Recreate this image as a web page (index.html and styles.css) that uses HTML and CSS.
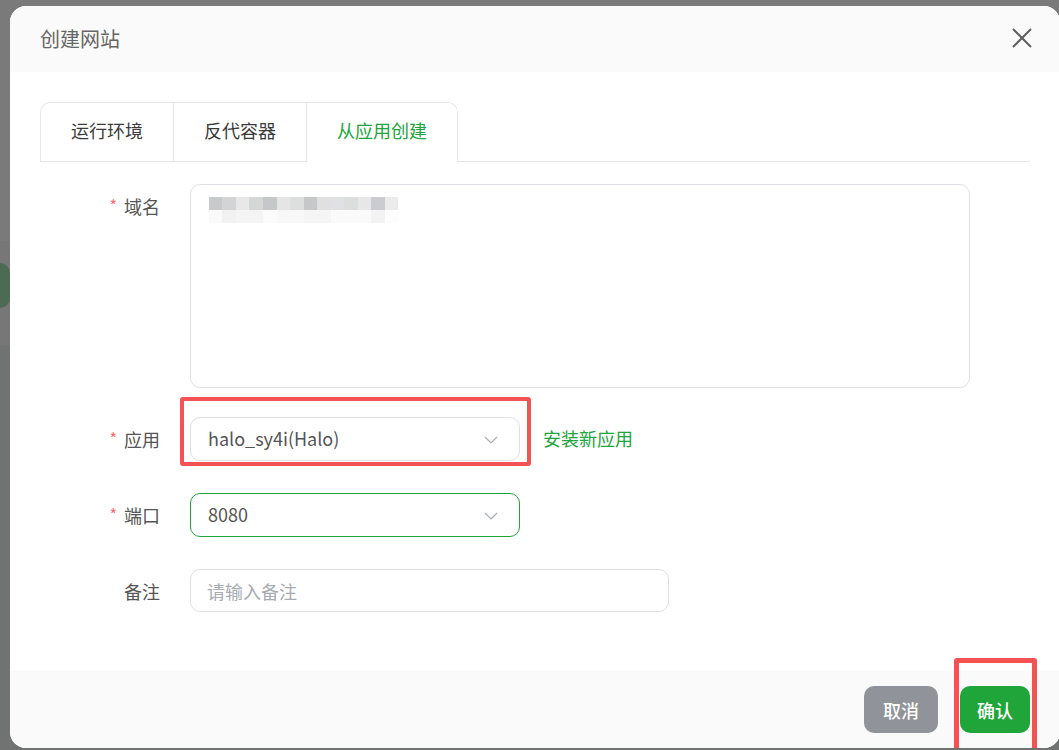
FILE: index.html
```html
<!DOCTYPE html>
<html lang="zh-CN">
<head>
  <meta charset="UTF-8" />
  <meta name="viewport" content="width=device-width, initial-scale=1.0" />
  <title>创建网站</title>
  <link rel="stylesheet" href="styles.css">
</head>
<body>
  <div class="page-behind">
    <div class="behind-btn"></div>
  </div>

  <div class="dialog">
    <div class="dialog-header">
      <span class="dialog-title">创建网站</span>
      <button class="dialog-close" aria-label="关闭">
        <svg width="20" height="20" viewBox="0 0 20 20">
          <path d="M1 1L19 19M19 1L1 19" stroke="#5f5f5f" stroke-width="2" fill="none" />
        </svg>
      </button>
    </div>

    <div class="dialog-body">
      <div class="tabs">
        <div class="tab-list">
          <div class="tab">运行环境</div>
          <div class="tab">反代容器</div>
          <div class="tab active">从应用创建</div>
        </div>
      </div>

      <form class="form">
        <div class="form-item first">
          <label class="form-label required">域名</label>
          <div class="textarea">
            <div class="mosaic row1"></div>
            <div class="mosaic row2"></div>
          </div>
        </div>

        <div class="form-item">
          <label class="form-label required">应用</label>
          <div class="select marked">
            <span class="select-value">halo_sy4i(Halo)</span>
            <svg class="chevron" width="14" height="8" viewBox="0 0 14 8">
              <path d="M1 1L7 7L13 1" stroke="#a8abb2" stroke-width="1.2" fill="none" />
            </svg>
          </div>
          <a class="link" href="#">安装新应用</a>
        </div>

        <div class="form-item">
          <label class="form-label required">端口</label>
          <div class="select focused">
            <span class="select-value">8080</span>
            <svg class="chevron" width="14" height="8" viewBox="0 0 14 8">
              <path d="M1 1L7 7L13 1" stroke="#a8abb2" stroke-width="1.2" fill="none" />
            </svg>
          </div>
        </div>

        <div class="form-item last">
          <label class="form-label">备注</label>
          <input class="input" type="text" placeholder="请输入备注">
        </div>
      </form>
    </div>

    <div class="dialog-footer">
      <button class="btn btn-cancel">取消</button>
      <button class="btn btn-confirm marked">确认</button>
    </div>
  </div>
</body>
</html>
```

FILE: styles.css
```css
html, body {
  margin: 0;
  height: 100%;
  overflow: hidden;
}

body {
  font-family: "Noto Sans CJK SC", "Noto Sans", sans-serif;
  background: linear-gradient(to bottom, #7a7a7a 0 241px, #777777 241px 345px, #717372 345px);
  padding: 6px 0 0 10px;
  box-sizing: border-box;
}

.page-behind {
  position: absolute;
  top: 0;
  left: 0;
}

.behind-btn {
  position: absolute;
  top: 263px;
  left: -30px;
  width: 40px;
  height: 45px;
  border-radius: 10px;
  background-color: #4b6b52;
}

.dialog {
  position: relative;
  width: 1050px;
  height: 742px;
  background-color: #fff;
  border-radius: 16px;
  overflow: hidden;
  display: flex;
  flex-direction: column;
}

.dialog-header {
  height: 66px;
  flex-shrink: 0;
  background-color: #fafafa;
  display: flex;
  align-items: center;
  justify-content: space-between;
  padding: 0 28px 0 30px;
}

.dialog-title {
  font-size: 20px;
  color: #666;
  margin-top: -1px;
}

.dialog-close {
  border: none;
  background: none;
  padding: 0;
  width: 20px;
  height: 20px;
  margin-top: -2px;
  cursor: pointer;
}

.dialog-body {
  flex: 1;
  padding: 30px 30px 0;
}

.tabs {
  border-bottom: 1px solid #e4e7ed;
  height: 59px;
}

.tab-list {
  display: inline-flex;
  border: 1px solid #e4e7ed;
  border-bottom: none;
  border-radius: 10px 10px 0 0;
  height: 59px;
  box-sizing: border-box;
}

.tab {
  height: 58px;
  line-height: 55px;
  padding: 0 30px;
  font-size: 18px;
  color: #3a3a3a;
  border-left: 1px solid #e4e7ed;
  cursor: pointer;
}

.tab:first-child {
  border-left: none;
  padding-left: 30px;
  width: 72px;
}

.tab.active {
  color: #20a53a;
  background-color: #fff;
  border-bottom: 1px solid #fff;
  border-top-right-radius: 10px;
  height: 59px;
  padding-right: 30px;
}

.form {
  margin-top: 22px;
}

.form-item {
  display: flex;
  align-items: flex-start;
  margin-bottom: 31px;
}

.form-item.first {
  margin-bottom: 29px;
}

.form-item.last {
  margin-top: 3px;
}

.form-label {
  width: 150px;
  flex-shrink: 0;
  box-sizing: border-box;
  padding-right: 30px;
  text-align: right;
  line-height: 44px;
  font-size: 18px;
  color: #555;
}

.form-label.required::before {
  content: "*";
  color: #f56c6c;
  margin-right: 7px;
  font-size: 16px;
  position: relative;
  top: -2px;
}

.textarea {
  width: 780px;
  height: 204px;
  box-sizing: border-box;
  border: 1px solid #dcdfe6;
  border-radius: 10px;
  padding: 12px 18px;
}

.mosaic {
  width: 189px;
  height: 13px;
}

.mosaic.row1 {
  background: linear-gradient(to right,
    #c8c9cb 0 13.5px, #d3d4d6 13.5px 27px, #e8e8e8 27px 40.5px, #d5d7d6 40.5px 54px,
    #c5c7c8 54px 67.5px, #e5e5e5 67.5px 81px, #dddfde 81px 94.5px, #c6c7c9 94.5px 108px,
    #e0e0e0 108px 121.5px, #e0e1e2 121.5px 135px, #dcdddd 135px 148.5px, #e6e7e6 148.5px 162px,
    #cbcccf 162px 175.5px, #ebebeb 175.5px 189px);
}

.mosaic.row2 {
  background: linear-gradient(to right,
    #fafafa 0 13.5px, #f1f1f1 13.5px 27px, #f4f4f4 27px 54px, #fbfbfb 54px 67.5px,
    #f8f8f8 67.5px 94.5px, #f5f5f5 94.5px 121.5px, #fafafa 121.5px 162px,
    #f3f3f3 162px 175.5px, #fdfdfd 175.5px 189px);
}

.select {
  position: relative;
  width: 330px;
  height: 44px;
  box-sizing: border-box;
  border: 1px solid #dcdfe6;
  border-radius: 10px;
  display: flex;
  align-items: center;
  justify-content: space-between;
  padding: 0 21px 0 17px;
  font-size: 18px;
  color: #555;
}

.select-value {
  margin-top: -2px;
}

.select.focused {
  border-color: #20a53a;
}

.chevron {
  margin-top: 1px;
}

.select.marked::after {
  content: "";
  position: absolute;
  left: -11px;
  top: -21px;
  right: -12px;
  bottom: -6px;
  border: 4px solid #f55353;
  border-radius: 3px;
}

.link {
  color: #20a53a;
  text-decoration: none;
  font-size: 18px;
  line-height: 42px;
  margin-left: 23px;
}

.input {
  width: 479px;
  height: 43px;
  box-sizing: border-box;
  border: 1px solid #dcdfe6;
  border-radius: 10px;
  padding: 0 16px;
  font-family: inherit;
  font-size: 18px;
  color: #555;
  outline: none;
}

.input::placeholder {
  color: #a8abb2;
}

.dialog-footer {
  height: 77px;
  flex-shrink: 0;
  background-color: #fafafa;
  display: flex;
  justify-content: flex-end;
  align-items: flex-start;
  gap: 22px;
  padding: 15px 30px 0;
  box-sizing: border-box;
}

.btn {
  position: relative;
  height: 47px;
  border: none;
  border-radius: 10px;
  color: #fff;
  font-family: inherit;
  font-size: 18px;
  font-weight: 500;
  cursor: pointer;
  padding: 0;
}

.btn-cancel {
  width: 74px;
  background-color: #909399;
}

.btn-confirm {
  width: 70px;
  background-color: #20a53a;
}

.btn.marked::after {
  content: "";
  position: absolute;
  left: -6px;
  top: -28px;
  right: -7px;
  bottom: -24px;
  border: 5px solid #f55353;
  border-radius: 3px;
}
```
